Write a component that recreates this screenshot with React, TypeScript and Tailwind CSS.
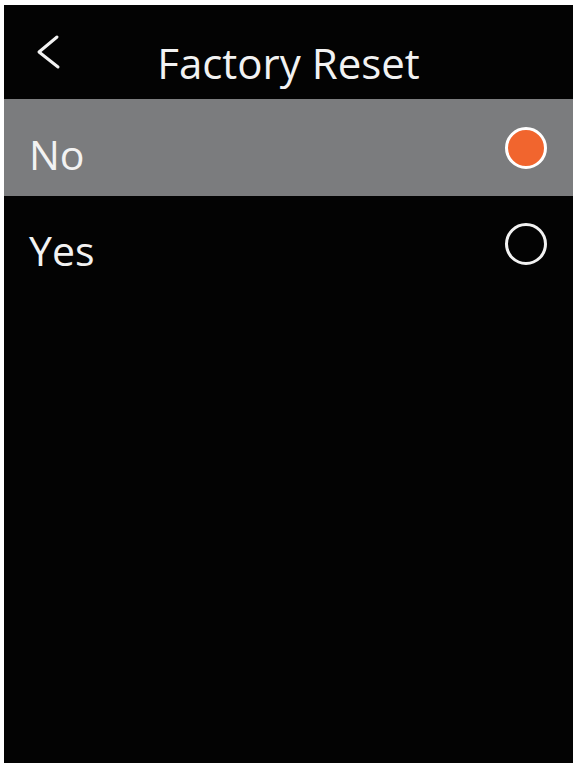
const options = [
  { label: "No", selected: true },
  { label: "Yes", selected: false },
];

const Radio = ({ checked }: { checked: boolean }) => (
  <span
    className={
      checked
        ? "block w-[42px] h-[42px] rounded-full border-[3px] border-white bg-[#f1652e]"
        : "block w-[42px] h-[42px] rounded-full border-[3px] border-[#f2f2f2] bg-transparent"
    }
  />
);

const App = () => {
  return (
    <div className="w-[584px] h-[768px] bg-white pt-[5px] pl-[4px] font-['Open_Sans',sans-serif]">
      <div className="w-[569px] h-[758px] bg-[#030303] text-[#f2f2f2]">
        <div className="grid grid-cols-[1fr_auto_1fr] h-[94px]">
          <div className="pt-[29px] pl-[32px]">
            <svg width="26" height="36" viewBox="0 0 26 36" fill="none">
              <path
                d="M21 3 L3 18 L22 33"
                stroke="#f2f2f2"
                strokeWidth="3"
                strokeLinecap="round"
                strokeLinejoin="round"
              />
            </svg>
          </div>
          <h1 className="pt-[37px] text-[42px] leading-none">Factory Reset</h1>
          <div />
        </div>

        {options.map((o) => (
          <div
            key={o.label}
            className={
              o.selected
                ? "flex items-center justify-between h-[97px] pl-[25px] pr-[26px] bg-[#7b7c7e]"
                : "flex items-center justify-between h-[96px] pl-[25px] pr-[26px]"
            }
          >
            <span className="pt-[13px] text-[41px] leading-none">{o.label}</span>
            <Radio checked={o.selected} />
          </div>
        ))}
      </div>
    </div>
  );
};

export default App;
